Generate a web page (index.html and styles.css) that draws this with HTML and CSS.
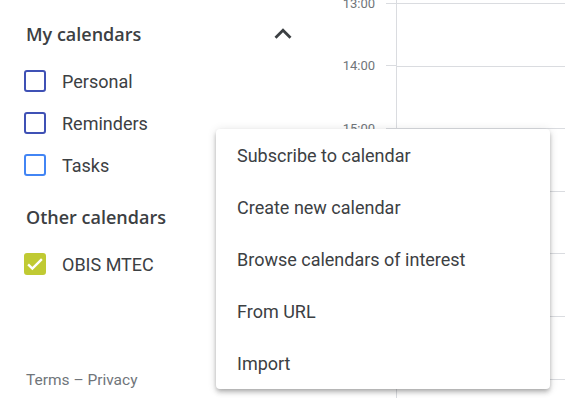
FILE: index.html
```html
<!DOCTYPE html>
<html>
<head>
<meta charset="utf-8">
<link rel="stylesheet" href="styles.css">
</head>
<body>
<div class="app">
  <aside class="sidebar">
    <div class="section-head first">
      <span class="section-title">My calendars</span>
      <svg class="chev" viewBox="0 0 24 24" width="34" height="34"><path d="M12 8l-6 6 1.41 1.41L12 10.83l4.59 4.58L18 14z" fill="#3c4043"/></svg>
    </div>
    <div class="cal-row"><span class="box indigo"></span><span class="cal-name">Personal</span></div>
    <div class="cal-row"><span class="box indigo"></span><span class="cal-name">Reminders</span></div>
    <div class="cal-row"><span class="box blue"></span><span class="cal-name">Tasks</span></div>
    <div class="section-head second">
      <span class="section-title">Other calendars</span>
    </div>
    <div class="cal-row"><span class="box lime checked"><svg viewBox="0 0 24 24" width="22" height="22"><path d="M4.5 12.5l4.6 4.6L19.5 6.7" fill="none" stroke="#fff" stroke-width="2.6"/></svg></span><span class="cal-name">OBIS MTEC</span></div>
    <div class="spacer"></div>
    <div class="footer">Terms – Privacy</div>
  </aside>
  <main class="grid">
    <div class="times">
      <div class="slot"><span class="tlabel">13:00</span><span class="tick"></span></div>
      <div class="slot"><span class="tlabel">14:00</span><span class="tick"></span></div>
      <div class="slot"><span class="tlabel">15:00</span><span class="tick"></span></div>
      <div class="slot"><span class="tlabel"></span><span class="tick"></span></div>
      <div class="slot"><span class="tlabel"></span><span class="tick"></span></div>
      <div class="slot"><span class="tlabel"></span><span class="tick"></span></div>
      <div class="slot"><span class="tlabel"></span><span class="tick"></span></div>
    </div>
    <div class="day">
      <div class="hour"></div><div class="hour"></div><div class="hour"></div>
      <div class="hour"></div><div class="hour"></div><div class="hour"></div>
      <div class="hour"></div>
    </div>
  </main>
  <ul class="menu">
    <li>Subscribe to calendar</li>
    <li>Create new calendar</li>
    <li>Browse calendars of interest</li>
    <li>From URL</li>
    <li>Import</li>
  </ul>
</div>
</body>
</html>
```
FILE: styles.css
```css
* { box-sizing: border-box; }
html, body { margin: 0; padding: 0; background: #fff; }
body {
  font-family: Roboto, "Liberation Sans", sans-serif;
  color: #3c4043;
  overflow: hidden;
}
.app {
  position: relative;
  display: flex;
  width: 565px;
  height: 398px;
  overflow: hidden;
}
.sidebar {
  width: 310px;
  flex: none;
  display: flex;
  flex-direction: column;
  padding-left: 24px;
}
.section-head {
  height: 42px;
  display: flex;
  align-items: center;
  justify-content: space-between;
  padding-left: 2px;
  margin-bottom: 5px;
}
.section-head.first { margin-top: 13px; padding-right: 10px; }
.section-head.second { margin-top: 10px; }
.section-title {
  font-family: "Open Sans", Roboto, sans-serif;
  font-size: 18px;
  font-weight: 600;
}
.chev { display: block; }
.cal-row {
  height: 42px;
  display: flex;
  align-items: center;
  gap: 16px;
}
.box {
  width: 22px;
  height: 22px;
  border: 2px solid;
  border-radius: 3px;
  flex: none;
  display: flex;
  align-items: center;
  justify-content: center;
}
.box.indigo { border-color: #3f51b5; }
.box.blue { border-color: #4285f4; }
.box.lime { border-color: #c0ca33; background: #c0ca33; }
.box.checked svg { display: block; flex: none; }
.cal-name { font-size: 18px; }
.spacer { flex: 1; }
.footer {
  font-size: 15.5px;
  color: #70757a;
  padding-left: 2px;
  height: 22px;
  margin-bottom: 5px;
}
.grid {
  flex: 1;
  display: flex;
}
.times {
  width: 86px;
  flex: none;
  margin-top: -28.3px;
}
.slot {
  height: 62.6px;
  display: flex;
  align-items: center;
}
.tlabel {
  flex: 1;
  text-align: right;
  padding-right: 11px;
  font-size: 13px;
  color: #70757a;
}
.tick {
  width: 10px;
  height: 1px;
  background: #dadce0;
}
.day {
  flex: 1;
  border-left: 1px solid #dadce0;
  padding-top: 3px;
}
.hour {
  height: 62.6px;
  border-top: 1px solid #dadce0;
}
.menu {
  position: absolute;
  left: 216px;
  top: 129px;
  width: 334px;
  margin: 0;
  padding: 0;
  list-style: none;
  background: #fff;
  border-radius: 4px;
  box-shadow: 0 4px 5px 0 rgba(0,0,0,.14), 0 1px 10px 0 rgba(0,0,0,.12), 0 2px 4px -1px rgba(0,0,0,.2);
}
.menu li {
  height: 52px;
  display: flex;
  align-items: center;
  padding-left: 21px;
  font-size: 18px;
  color: #3c4043;
}
```
